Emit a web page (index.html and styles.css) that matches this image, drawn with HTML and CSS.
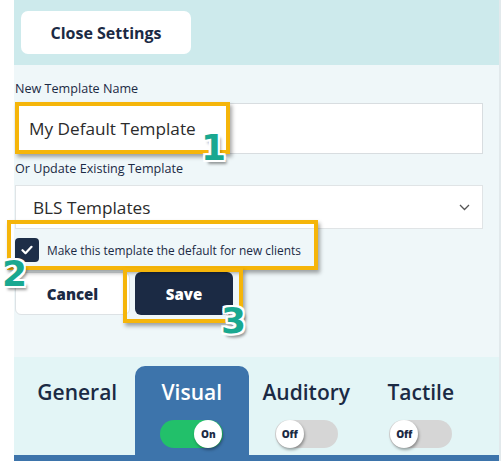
FILE: index.html
```html
<!DOCTYPE html>
<html>
    <head>
        <link rel="stylesheet" href="styles.css">
    </head>
    <body>
        <div class="page">
            <div class="panel">
                <div class="top">
                    <button class="close-btn">Close Settings</button>
                </div>
                <div class="form">
                    <label class="field-label">New Template Name</label>
                    <div class="input">My Default Template</div>
                    <label class="field-label second">Or Update Existing Template</label>
                    <div class="select">
                        <span>BLS Templates</span>
                        <svg class="chevron" width="11" height="7" viewBox="0 0 11 7"><path d="M1 1l4.5 4.5L10 1" fill="none" stroke="#555" stroke-width="1.3"/></svg>
                    </div>
                    <div class="check-row">
                        <span class="checkbox">
                            <svg width="12" height="10" viewBox="0 0 12 10"><path d="M1.5 5.2l3 3 6-6.4" fill="none" stroke="#fff" stroke-width="2.2" stroke-linecap="round" stroke-linejoin="round"/></svg>
                        </span>
                        <span class="check-text">Make this template the default for new clients</span>
                    </div>
                    <div class="actions">
                        <button class="btn cancel">Cancel</button>
                        <button class="btn save">Save</button>
                    </div>
                </div>
                <div class="tabs">
                    <div class="tab">
                        <div class="tab-name">General</div>
                    </div>
                    <div class="tab active">
                        <div class="tab-name">Visual</div>
                        <div class="toggle on"><span class="knob">On</span></div>
                    </div>
                    <div class="tab">
                        <div class="tab-name">Auditory</div>
                        <div class="toggle"><span class="knob">Off</span></div>
                    </div>
                    <div class="tab">
                        <div class="tab-name">Tactile</div>
                        <div class="toggle"><span class="knob">Off</span></div>
                    </div>
                </div>
                <div class="bar"></div>
            </div>

            <!-- tutorial callouts drawn over the form -->
            <div class="callout box-1"></div>
            <div class="callout box-2"></div>
            <div class="callout box-3"></div>
            <div class="step step-1">1</div>
            <div class="step step-2">2</div>
            <div class="step step-3">3</div>
        </div>
    </body>
</html>
```

FILE: styles.css
```css
* {
    box-sizing: border-box;
}
body {
    margin: 0;
    background-color: #fff;
    font-family: "Open Sans", "Noto Sans", sans-serif;
    color: #1b2a44;
}
.page {
    position: relative;
    width: 503px;
    height: 461px;
    overflow: hidden;
}
.panel {
    margin-left: 14px;
    width: 487px;
    border-right: 2px solid #e2e9ec;
}
.top {
    height: 65px;
    padding: 11px 7px 0;
    background-color: #cdeaec;
}
.close-btn {
    width: 170px;
    height: 43px;
    border: 0;
    border-radius: 7px;
    background-color: #fff;
    font-family: inherit;
    font-size: 16px;
    font-weight: 700;
    color: #1b2a44;
}
.form {
    height: 292px;
    padding: 15px 0 0 1px;
    background-color: #eff7f9;
}
.field-label {
    display: block;
    font-size: 12.6px;
    line-height: 18px;
    font-weight: 500;
    margin-bottom: 5px;
}
.field-label.second {
    margin-top: 6px;
    margin-bottom: 7px;
}
.input {
    width: 468px;
    height: 51px;
    padding: 0 13px;
    display: flex;
    align-items: center;
    background-color: #fff;
    border: 1px solid #d8dde0;
    font-size: 17.2px;
    color: #2b2b2b;
}
.select {
    width: 468px;
    height: 44px;
    padding: 0 12px 0 17px;
    display: flex;
    align-items: center;
    justify-content: space-between;
    background-color: #fff;
    border: 1px solid #e0e4e6;
    font-size: 17.2px;
    color: #2b2b2b;
}
.check-row {
    margin-top: 9px;
    height: 24px;
    display: flex;
    align-items: center;
    gap: 8px;
}
.checkbox {
    width: 24px;
    height: 24px;
    border-radius: 4px;
    background-color: #1d2e48;
    display: flex;
    align-items: center;
    justify-content: center;
}
.check-text {
    font-size: 11.9px;
    font-weight: 500;
}
.actions {
    margin-top: 10px;
    display: flex;
    gap: 5px;
}
.btn {
    height: 43px;
    border-radius: 6px;
    font-family: inherit;
    font-size: 15px;
    font-weight: 800;
}
.cancel {
    width: 115px;
    background-color: #fff;
    border: 1px solid #dde2e5;
    color: #1b2a44;
}
.save {
    width: 98px;
    border: 0;
    background-color: #1b2a44;
    color: #fff;
}
.tabs {
    height: 98px;
    padding: 9px 0 0 6px;
    display: grid;
    grid-template-columns: repeat(4, 114.5px);
    background-color: #e3f5f6;
}
.tab {
    padding-top: 12px;
    display: flex;
    flex-direction: column;
    align-items: center;
    border-radius: 10px 10px 0 0;
}
.tab.active {
    background-color: #3d74ab;
    color: #fff;
}
.tab-name {
    font-size: 21px;
    line-height: 29px;
    font-weight: 600;
}
.toggle {
    margin-top: 13px;
    width: 63px;
    height: 28px;
    border-radius: 14px;
    background-color: #d6d6d6;
    display: flex;
    align-items: center;
    padding: 0 1px;
}
.toggle.on {
    background-color: #22c06a;
    justify-content: flex-end;
}
.knob {
    width: 28px;
    height: 28px;
    border-radius: 50%;
    background-color: #fff;
    box-shadow: 1px 2px 3px rgba(0, 0, 0, 0.35);
    display: flex;
    align-items: center;
    justify-content: center;
    font-size: 10px;
    font-weight: 800;
    color: #1b2a44;
}
.bar {
    height: 6px;
    background-color: #3d74ab;
}
.callout {
    position: absolute;
    border: 4px solid #f5b50a;
    box-shadow: 2px 3px 4px rgba(0, 0, 0, 0.35);
}
.box-1 {
    left: 15px;
    top: 102px;
    width: 215px;
    height: 52px;
}
.box-2 {
    left: 7px;
    top: 220px;
    width: 311px;
    height: 50px;
}
.box-3 {
    left: 123px;
    top: 268px;
    width: 120px;
    height: 55px;
}
.step {
    position: absolute;
    font-family: "DejaVu Sans", sans-serif;
    font-size: 36px;
    font-weight: 700;
    line-height: 1;
    color: #19a890;
    text-shadow:
        2px 0 0 #fff, -2px 0 0 #fff, 0 2px 0 #fff, 0 -2px 0 #fff,
        2px 2px 0 #fff, -2px -2px 0 #fff, 2px -2px 0 #fff, -2px 2px 0 #fff,
        3px 4px 3px rgba(0, 0, 0, 0.4);
}
.step-1 {
    left: 201px;
    top: 130px;
}
.step-2 {
    left: 2px;
    top: 256px;
}
.step-3 {
    left: 221px;
    top: 303px;
}
```
